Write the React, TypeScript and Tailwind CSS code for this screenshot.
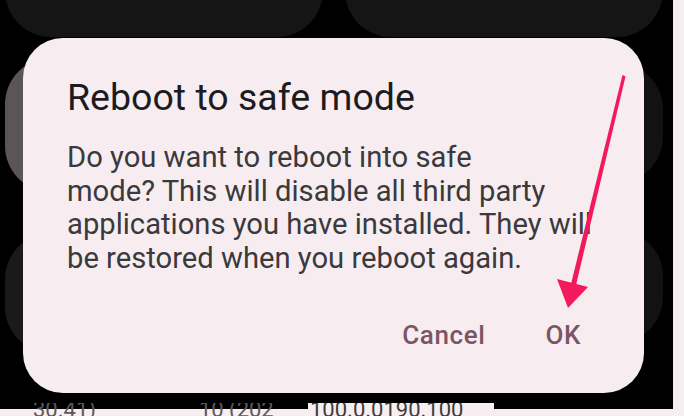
import React from "react";

function Arrow() {
  return (
    <svg className="absolute left-0 top-0" width="684" height="416" viewBox="0 0 684 416">
      <path d="M622.5 75 L625.5 76.5 L576 285 L571 284 Z" fill="#f2195c" />
      <path d="M557 279 L588 287 L568 308 Z" fill="#f2195c" />
    </svg>
  );
}

function Tile({ className }: { className: string }) {
  return <div className={className} />;
}

export default function App() {
  return (
    <div className="w-[684px] h-[416px] bg-[#f7eef2] overflow-hidden relative" style={{ fontFamily: "Roboto, 'Noto Sans', sans-serif" }}>
      <div className="flex flex-col w-[673px]">
        {/* black phone screen */}
        <div className="relative h-[403px] bg-black overflow-hidden">
          {/* background tiles */}
          <div className="grid grid-cols-[318px_318px] gap-x-[22px] pl-[5px] mt-[-93px]">
            <Tile className="h-[130px] rounded-[46px] bg-[#151515]" />
            <Tile className="h-[130px] rounded-[46px] bg-[#151515]" />
            <Tile className="h-[134px] mt-[21px] rounded-[46px] bg-[#5b5458]" />
            <Tile className="h-[120px] mt-[26px] rounded-[46px] bg-[#121212]" />
            <Tile className="h-[120px] mt-[41px] rounded-[46px] bg-[#1a1a1a]" />
            <Tile className="h-[113px] mt-[38px] rounded-[46px] bg-[#121212]" />
          </div>
          {/* dialog */}
          <div className="absolute left-[23px] top-[38px] w-[621px] h-[355px] rounded-[40px] bg-[#f7edf1] pl-[44px] pt-[38px]">
            <div className="text-[37.5px] leading-[43px] text-[#1d1b1e]">Reboot to safe mode</div>
            <div className="mt-[22px] text-[29.2px] leading-[33.5px] text-[#3a393c]">
              Do you want to reboot into safe
              <br />
              mode? This will disable all third party
              <br />
              applications you have installed. They will
              <br />
              be restored when you reboot again.
            </div>
            <div className="flex justify-end gap-[60px] pr-[63px] mt-[45px] text-[26px] leading-[30px] font-medium tracking-[0.6px] text-[#7b5566]">
              <span>Cancel</span>
              <span>OK</span>
            </div>
          </div>
        </div>
        {/* bottom strip with peeking text */}
        <div className="flex h-[13px] overflow-hidden text-[22px] leading-none">
          <div className="w-[308px] h-[13px] bg-[linear-gradient(#000_0px,#000_6px,#f7eef2_6px)] flex text-[#5a5a5a]">
            <span className="ml-[33px] mt-[-4px]">30.41)</span>
            <span className="ml-[103px] mt-[-4px]">10 (202</span>
          </div>
          <div className="w-[186px] h-[13px] bg-[#f7eef2] text-[#3c3c3c]">
            <span className="block ml-[2px] mt-[-4px]">100.0.0190.100</span>
          </div>
          <div className="w-[179px] h-[13px] bg-[linear-gradient(#000_0px,#000_6px,#f7eef2_6px)]" />
        </div>
      </div>
      <Arrow />
    </div>
  );
}
